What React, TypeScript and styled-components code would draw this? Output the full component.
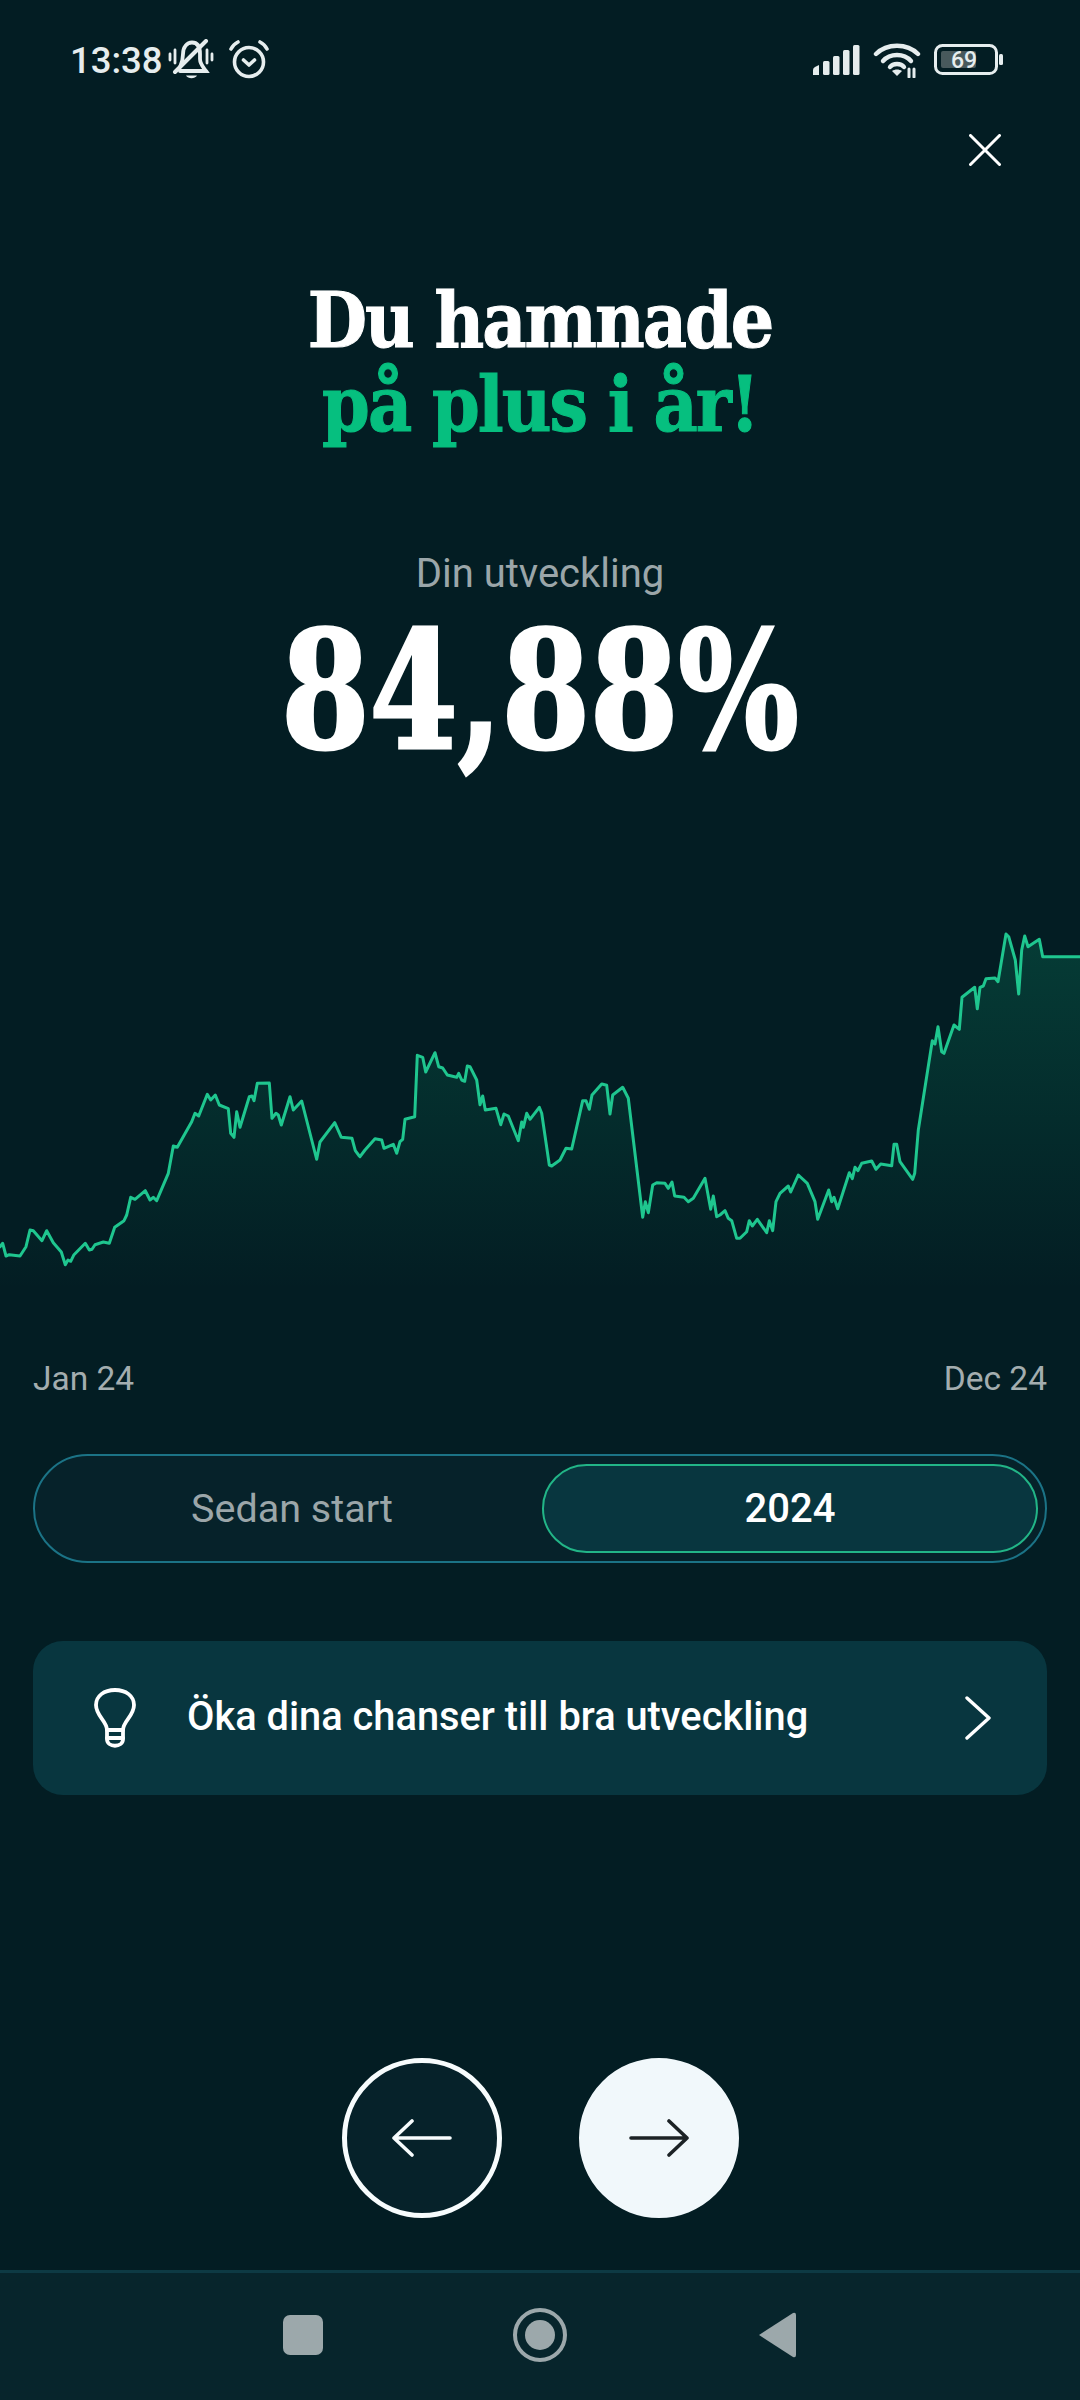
import React from 'react'
import styled, { createGlobalStyle } from 'styled-components'

const GlobalStyle = createGlobalStyle`
  html, body {
    margin: 0;
    padding: 0;
    background: #031d23;
  }
`

const Page = styled.div`
  width: 1080px;
  height: 2400px;
  display: flex;
  flex-direction: column;
  background: #031d23;
  font-family: Roboto, 'Liberation Sans', sans-serif;
  overflow: hidden;
`

const StatusBar = styled.div`
  height: 120px;
  flex: none;
  box-sizing: border-box;
  padding: 0 76px 0 70px;
  display: flex;
  align-items: center;
  color: #e6edee;
`

const Clock = styled.span`
  font-size: 36.5px;
  font-weight: 500;
  margin-right: 5px;
`

const StatusGroup = styled.div<{ $gap: number }>`
  display: flex;
  align-items: center;
  gap: ${p => p.$gap}px;
`

const Spacer = styled.div`
  flex: 1;
`

const BatteryLevel = styled.text`
  font-family: Roboto, sans-serif;
  font-size: 23px;
  font-weight: 500;
  fill: #e6edee;
`

const CloseRow = styled.div`
  height: 60px;
  flex: none;
  display: flex;
  justify-content: flex-end;
  align-items: center;
  padding-right: 79px;
`

const Title = styled.h1`
  margin: 99px 0 0;
  text-align: center;
  font-family: 'DejaVu Serif Condensed', 'DejaVu Serif', serif;
  font-weight: 700;
  font-size: 76px;
  line-height: 84px;
  letter-spacing: -2px;
  color: #ffffff;
  -webkit-text-stroke: 1px currentColor;
`

const TitleAccent = styled.span`
  display: block;
  color: #06bf7f;
`

const Caption = styled.div`
  margin-top: 103px;
  text-align: center;
  font-size: 40px;
  line-height: 48px;
  color: #9ba6a9;
`

const Result = styled.div`
  margin-top: 13px;
  text-align: center;
  font-family: 'DejaVu Serif Condensed', 'DejaVu Serif', serif;
  font-weight: 700;
  font-size: 162px;
  line-height: 160px;
  color: #ffffff;
  -webkit-text-stroke: 3px #ffffff;
  transform: scaleX(0.87);
`

const Chart = styled.svg`
  display: block;
  flex: none;
  margin-top: 149px;
`

const AxisRow = styled.div`
  margin-top: 69px;
  padding: 0 33px;
  display: flex;
  justify-content: space-between;
  font-size: 33.5px;
  line-height: 40px;
  color: #a3adaf;
`

const Segmented = styled.div`
  margin: 55px 33px 0;
  height: 109px;
  box-sizing: border-box;
  padding: 8px 7px;
  display: grid;
  grid-template-columns: 1fr 496px;
  border: 2px solid #1b7386;
  border-radius: 55px;
  background: #06222a;
`

const Segment = styled.div<{ $active?: boolean }>`
  display: flex;
  align-items: center;
  justify-content: center;
  box-sizing: border-box;
  border-radius: 45px;
  font-size: ${p => (p.$active ? 40 : 39.5)}px;
  font-weight: ${p => (p.$active ? 500 : 400)};
  color: ${p => (p.$active ? '#ffffff' : '#9ba6a9')};
  background: ${p => (p.$active ? '#08363f' : 'transparent')};
  border: 2.5px solid ${p => (p.$active ? '#22b587' : 'transparent')};
`

const TipCard = styled.div`
  margin: 78px 33px 0;
  height: 154px;
  box-sizing: border-box;
  padding: 0 56px 0 60px;
  display: flex;
  align-items: center;
  border-radius: 30px;
  background: #08363f;
`

const TipText = styled.span`
  flex: 1;
  margin-left: 50px;
  padding-bottom: 3px;
  font-size: 39.8px;
  font-weight: 500;
  color: #ffffff;
`

const Pager = styled.div`
  margin-top: 263px;
  display: flex;
  justify-content: center;
  gap: 77px;
`

const RoundButton = styled.div<{ $filled?: boolean }>`
  width: 160px;
  height: 160px;
  box-sizing: border-box;
  border-radius: 50%;
  display: flex;
  align-items: center;
  justify-content: center;
  border: 5px solid ${p => (p.$filled ? '#f1f8fb' : '#f7fcfd')};
  background: ${p => (p.$filled ? '#f1f8fb' : '#06222a')};
`

const NavBar = styled.div`
  margin-top: auto;
  height: 130px;
  flex: none;
  box-sizing: border-box;
  border-top: 3px solid #0d3a44;
  padding-bottom: 4px;
  background: #07252c;
  display: flex;
  align-items: center;
  justify-content: center;
  gap: 190px;
`

const NavSquare = styled.div`
  width: 40px;
  height: 40px;
  border-radius: 7px;
  background: #9ca8ab;
`

const NavCircle = styled.div`
  width: 54px;
  height: 54px;
  box-sizing: border-box;
  border: 4px solid #9ca8ab;
  border-radius: 50%;
  display: flex;
  align-items: center;
  justify-content: center;
`

const NavDot = styled.div`
  width: 30px;
  height: 30px;
  border-radius: 50%;
  background: #9ca8ab;
`

const seg1 = '0,1040 8,1030 18,1068 28,1064 60,1068 78,1040 90,990 100,992 126,1022 140,992 160,1028 184,1056 196,1094 204,1080 212,1084 222,1064 256,1030 268,1050 276,1048 285,1034 310,1026 328,1030 344,982 372,962 380,945 392,892 405,898 436,872 450,900 460,892 470,902 505,820 520,738 532,742 575,665 585,640 596,648 622,583 632,600 646,585 658,615 685,626 692,700 702,712 710,635 720,682 748,590 756,588 762,602 772,550 808,549 816,655 828,640 835,645 844,675 870,590 880,630 905,603 935,720 950,778 960,726 1004,668 1024,712 1056,715 1066,752 1078,768'
const seg2 = '0,770 15,750 45,716 65,720 72,745 100,733 110,760 120,725 128,718 135,658 164,650 172,466 188,472 197,516 225,458 236,500 248,504 262,525 290,532 296,520 305,540 314,544 322,498 330,500 350,540 360,614 368,588 376,630 408,625 422,674 432,642 445,648 475,722 485,666 490,682 500,640 510,658 538,622 545,640 568,795 575,798 600,780 618,745 635,747 668,602 678,602 688,628 696,585 725,552 740,556 750,642 758,585 788,562 805,595 848,952 856,905 865,938 878,855 890,848 915,850 925,865 936,846 944,888 972,892 985,905 1000,895 1035,835 1052,928 1060,888 1070,950 1080,945'
const seg3 = '15,932 25,955 35,962 50,1015 60,1015 80,995 88,962 97,978 112,958 140,998 148,962 158,992 168,905 180,880 205,858 212,876 235,825 262,850 285,905 293,958 326,870 335,905 342,892 353,926 388,818 397,836 405,802 414,812 425,790 455,783 468,808 482,792 515,797 522,733 530,733 540,785 578,838 584,820 595,690 637,422 645,432 654,380 665,455 672,460 702,375 718,388 726,292 764,262 772,326 780,262 790,258 798,236 825,234 834,245 858,102 866,110 886,180 896,282 905,150 914,108 924,140 958,118 968,170 1080,170'

// zoomed crops were 3x and started at x = 0, 360, 720
const CHART_TOP = 920
const toPoints = (seg: string, offset: number) =>
  seg.split(' ').map(p => {
    const [x, y] = p.split(',').map(Number)
    return `${(x / 3 + offset).toFixed(1)},${(y / 3 + 900 - CHART_TOP).toFixed(1)}`
  }).join(' ')

const line = [toPoints(seg1, 0), toPoints(seg2, 360), toPoints(seg3, 720)].join(' ')

const BellOff = () => (
  <svg width="46" height="42" viewBox="0 0 46 42" fill="none" stroke="#e6edee" strokeLinecap="round" strokeWidth="3.8">
    <path d="M12 28 C14 24 15 20 15 15 C15 8 19 3.5 24 3.5 C30 3.5 32 9 32 15 V20 C32 25 35 28 38 32 H12" />
    <path d="M38 2 L7 33" strokeWidth="4" />
    <path d="M18 36.5 H29 C27 40 20 40 18 36.5 Z" fill="#e6edee" stroke="none" />
    <path d="M2 15 V21 M7 11 V24 M39 11 V24 M44 15 V21" strokeWidth="2.8" />
  </svg>
)

const AlarmClock = () => (
  <svg width="42" height="40" viewBox="0 0 42 40" fill="none" stroke="#e6edee" strokeLinecap="round" strokeLinejoin="round" strokeWidth="3.6">
    <circle cx="21" cy="22" r="14.5" />
    <path d="M15.5 20 L21 25 L26.5 20" />
    <path d="M3 9 C5 5 7 3.5 10 2 M32 2 C35 3.5 37 5 39 9" />
  </svg>
)

const Signal = () => (
  <svg width="48" height="32" viewBox="0 0 48 32" fill="#e6edee">
    <path d="M1 31 V26 Q1 24 3 23 L7 21 V31 Z" />
    <rect x="11" y="17" width="6.5" height="14" rx="1.5" />
    <rect x="21" y="12" width="6.5" height="19" rx="1.5" />
    <rect x="31" y="6" width="6.5" height="25" rx="1.5" />
    <rect x="41" y="1" width="6.5" height="30" rx="1.5" />
  </svg>
)

const Wifi = () => (
  <svg width="48" height="36" viewBox="0 0 48 36" fill="none" stroke="#e6edee" strokeLinecap="round" strokeWidth="4.4">
    <path d="M3 12 C14 1 34 1 45 12" />
    <path d="M10 19 C17 11 31 11 38 19" />
    <path d="M17 25 C20 21 28 21 31 25" />
    <path d="M24 34 L19 29 C22 27 26 27 29 29 Z" fill="#e6edee" stroke="none" />
    <path d="M36 27 V35 M41 27 V35" strokeWidth="3" />
  </svg>
)

const Battery = () => (
  <svg width="70" height="32" viewBox="0 0 70 32">
    <rect x="1.5" y="1.5" width="61" height="28" rx="7" fill="none" stroke="#e6edee" strokeWidth="3" />
    <rect x="7" y="7" width="35" height="17" rx="2" fill="#48595c" />
    <rect x="65" y="10" width="4" height="11" rx="1.5" fill="#e6edee" />
    <BatteryLevel x="30" y="24" textAnchor="middle">69</BatteryLevel>
  </svg>
)

const Bulb = () => (
  <svg width="44" height="60" viewBox="0 0 44 60" fill="none" stroke="#ffffff" strokeWidth="3.8" strokeLinecap="round" strokeLinejoin="round">
    <path d="M14 42 C14 33 3 28 3 17 C3 8 11 2 22 2 C33 2 41 8 41 17 C41 28 30 33 30 42 Z" />
    <path d="M14 42 V51 C14 60 30 60 30 51 V42" />
    <path d="M14 50 H30" />
  </svg>
)

const Chevron = () => (
  <svg width="26" height="44" viewBox="0 0 26 44" fill="none" stroke="#ffffff" strokeWidth="3.4" strokeLinecap="round" strokeLinejoin="round">
    <path d="M2 2 L24 22 L2 42" />
  </svg>
)

const Arrow = ({ dir, color }: { dir: 'left' | 'right'; color: string }) => (
  <svg width="60" height="38" viewBox="0 0 60 38" fill="none" stroke={color} strokeWidth="3.6" strokeLinecap="round" strokeLinejoin="round">
    {dir === 'left'
      ? <path d="M58 19 H2 M20 2 L2 19 L20 36" />
      : <path d="M2 19 H58 M40 2 L58 19 L40 36" />}
  </svg>
)

export default function App() {
  return (
    <Page>
      <GlobalStyle />
      <StatusBar>
        <Clock>13:38</Clock>
        <StatusGroup $gap={14}>
          <BellOff />
          <AlarmClock />
        </StatusGroup>
        <Spacer />
        <StatusGroup $gap={13}>
          <Signal />
          <Wifi />
          <Battery />
        </StatusGroup>
      </StatusBar>
      <CloseRow>
        <svg width="32" height="32" viewBox="0 0 32 32" stroke="#ffffff" strokeWidth="3" strokeLinecap="round">
          <path d="M1.5 1.5 L30.5 30.5 M30.5 1.5 L1.5 30.5" />
        </svg>
      </CloseRow>
      <Title>
        Du hamnade
        <TitleAccent>på plus i år!</TitleAccent>
      </Title>
      <Caption>Din utveckling</Caption>
      <Result>84,88%</Result>
      <Chart width="1080" height="370" viewBox="0 0 1080 370">
        <defs>
          <linearGradient id="chartFill" gradientUnits="userSpaceOnUse" x1="0" y1="0" x2="0" y2="370">
            <stop offset="0" stopColor="#0fbf85" stopOpacity="0.2" />
            <stop offset="1" stopColor="#0fbf85" stopOpacity="0" />
          </linearGradient>
        </defs>
        <polygon points={`0,370 ${line} 1080,370`} fill="url(#chartFill)" />
        <polyline points={line} fill="none" stroke="#1fc68f" strokeWidth="3" strokeLinejoin="round" strokeLinecap="round" />
      </Chart>
      <AxisRow>
        <span>Jan 24</span>
        <span>Dec 24</span>
      </AxisRow>
      <Segmented>
        <Segment>Sedan start</Segment>
        <Segment $active>2024</Segment>
      </Segmented>
      <TipCard>
        <Bulb />
        <TipText>Öka dina chanser till bra utveckling</TipText>
        <Chevron />
      </TipCard>
      <Pager>
        <RoundButton>
          <Arrow dir="left" color="#f7fcfd" />
        </RoundButton>
        <RoundButton $filled>
          <Arrow dir="right" color="#1c2225" />
        </RoundButton>
      </Pager>
      <NavBar>
        <NavSquare />
        <NavCircle>
          <NavDot />
        </NavCircle>
        <svg width="40" height="48" viewBox="0 0 40 48" fill="#9ca8ab">
          <path d="M2 24 L36 2 Q39 1 39 4 V44 Q39 47 36 46 Z" />
        </svg>
      </NavBar>
    </Page>
  )
}
